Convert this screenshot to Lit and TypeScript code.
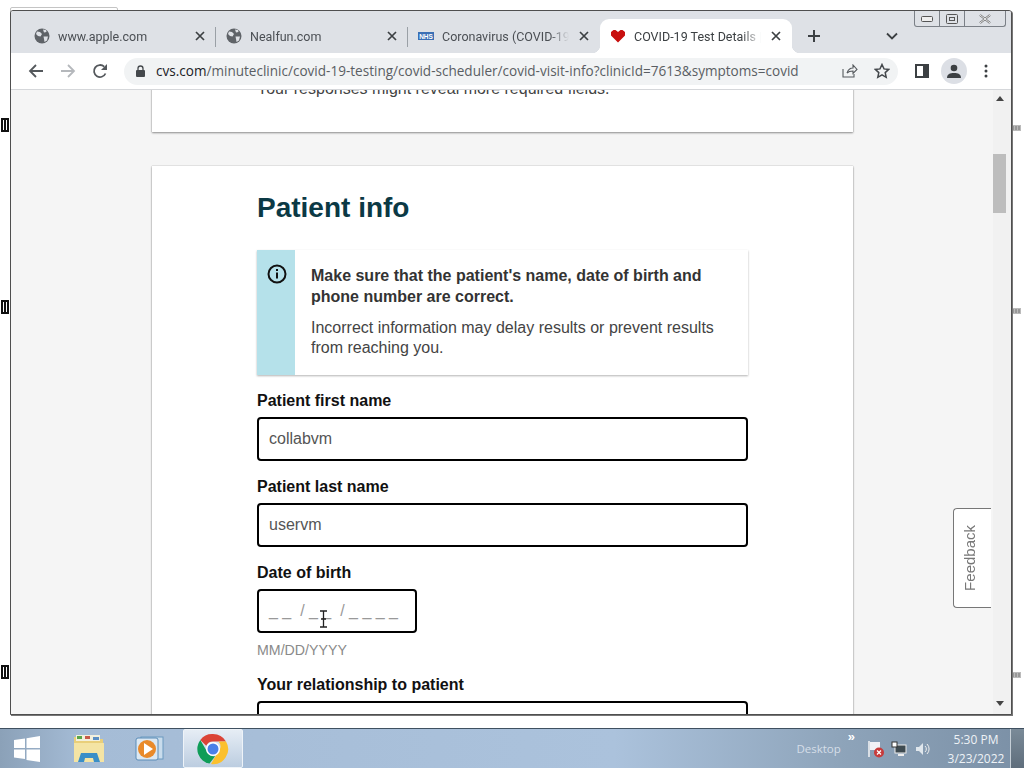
import { LitElement, html, css } from "lit";
import { customElement } from "lit/decorators.js";

const globe = html`<svg class="fav" viewBox="0 0 16 16"><circle cx="8" cy="8" r="7.5" fill="#5f6368"/><path d="M3 3.500l3 .5 2 2-1.500 2.500-2.500-.5L2 6zM9 1.500l3 .5.500 2-2.500.5zM9.500 8.500l4.500 0-1 4-2.500 1.500-.5-3z" fill="#dee1e6"/></svg>`;
const close = html`<svg class="x" viewBox="0 0 10 10"><path d="M1 1l8 8M9 1l-8 8" stroke="#3c4043" stroke-width="1.700" fill="none"/></svg>`;

@customElement("app-root")
export class AppRoot extends LitElement {
  static styles = css`
    :host { display: flex; flex-direction: column; width: 1024px; height: 768px; position: relative; overflow: hidden; background: #fff; font-family: "Liberation Sans", Arial, sans-serif; }
    .desktop { flex: 1; position: relative; }
    .backwin { position: absolute; left: 10px; top: 7px; width: 106px; height: 8px; border: 1px solid #c4c4c4; border-radius: 2px 2px 0 0; }
    .mark { position: absolute; }
    .window { position: absolute; left: 10px; top: 10px; width: 1000px; height: 703px; border: 1px solid #4f4f4f; border-radius: 3px 3px 0 0; box-shadow: 1px 1px 0 #777; display: flex; flex-direction: column; overflow: hidden; background: #f5f5f5; }
    .tabstrip { height: 42px; background: #dee1e6; display: flex; align-items: flex-end; padding-left: 13px; flex: none; position: relative; }
    .tab { width: 192px; height: 34px; display: flex; align-items: center; position: relative; box-sizing: border-box; padding-left: 10px; font: 12.500px Roboto, sans-serif; color: #4b4f54; }
    .tab.sep::after { content: ""; position: absolute; right: 0; top: 8px; height: 20px; width: 1px; background: #9aa0a6; }
    .tab.active { background: #fff; border-radius: 9px 9px 0 0; color: #3c4043; }
    .tab.active::before, .tab.active::after { content: ""; position: absolute; bottom: 0; width: 8px; height: 8px; }
    .tab.active::before { left: -8px; background: radial-gradient(circle at 0 0, transparent 8px, #fff 8.500px); }
    .tab.active::after { right: -8px; background: radial-gradient(circle at 100% 0, transparent 8px, #fff 8.500px); }
    .fav { width: 16px; height: 16px; flex: none; margin-right: 8px; }
    .title { flex: 1; white-space: nowrap; overflow: hidden; min-width: 0; -webkit-mask-image: linear-gradient(90deg, #000 85%, transparent 100%); mask-image: linear-gradient(90deg, #000 85%, transparent 100%); }
    .x { width: 10px; height: 10px; flex: none; margin: 0 11px 0 10px; }
    .plus { width: 14px; height: 14px; margin: 0 0 10px 15px; flex: none; }
    .chev { width: 12px; height: 8px; margin: 0 0 13px 65px; flex: none; }
    .controls { position: absolute; right: 5px; top: 0; width: 92px; height: 16px; box-sizing: border-box; border: 1px solid #7b8087; border-top: 0; border-radius: 0 0 3px 3px; display: grid; grid-template-columns: 25px 25px 1fr; }
    .controls > div { display: flex; align-items: center; justify-content: center; border-right: 1px solid #7b8087; }
    .controls > div:last-child { border-right: 0; }
    .toolbar { height: 36px; flex: none; background: #fff; border-bottom: 1px solid #d5d7da; display: flex; align-items: center; box-sizing: content-box; }
    .tb { flex: none; display: flex; align-items: center; justify-content: center; width: 32px; height: 32px; }
    .tb.first { margin-left: 8px; }
    .tbs { display: flex; padding-left: 9px; }
    .omni { margin-left: 8px; width: 774px; height: 27px; border-radius: 14px; background: #f1f3f4; display: flex; align-items: center; padding-left: 12px; box-sizing: border-box; font: 13.550px "Open Sans", sans-serif; color: #5a5e63; flex: none; }
    .omni .url { flex: none; width: 678px; margin-left: 11px; white-space: nowrap; }
    .omni .url b { font-weight: 400; color: #202124; }
    .omni svg { flex: none; }
    .omni .act { width: 32px; flex: none; display: flex; justify-content: center; }
    .avatar { width: 26px; height: 26px; border-radius: 50%; background: #dcdfe5; display: flex; align-items: center; justify-content: center; }
    .view { flex: 1; min-height: 0; display: flex; overflow: hidden; position: relative; }
    .page { width: 982px; overflow: hidden; flex: none; background: #f5f5f5; }
    .bar { flex: 1; background: #f1f1f1; display: flex; flex-direction: column; position: relative; }
    .thumb { position: absolute; left: 0; top: 64px; width: 13px; height: 59px; background: #bdbdbd; }
    .arr { position: absolute; left: 3px; width: 0; height: 0; border-left: 4px solid transparent; border-right: 4px solid transparent; }
    .arr.up { top: 6px; border-bottom: 5px solid #444; }
    .arr.dn { bottom: 8px; border-top: 5px solid #444; }
    .card { margin-left: 141px; width: 701px; box-sizing: border-box; background: #fff; box-shadow: 0 1px 2px rgba(0,0,0,.4), 0 0 1px rgba(0,0,0,.3); padding-left: 105px; }
    .card.top { margin-top: -10px; height: 52px; margin-bottom: 34px; font-size: 16px; color: #444; line-height: 18px; }
    .inner { width: 491px; }
    h1 { margin: 0; padding-top: 24px; font-size: 28px; line-height: 36px; font-weight: 700; color: #0b3945; }
    .note { margin-top: 24px; height: 125px; display: flex; background: #fff; box-shadow: 0 1px 2px rgba(0,0,0,.3); }
    .strip { width: 38px; flex: none; background: #b5e1ea; display: flex; justify-content: center; padding: 14px 0 0 1px; box-sizing: border-box; }
    .msg { padding: 15px 24px 0 16px; font-size: 16px; color: #444; }
    .msg p { margin: 0; line-height: 20px; }
    .msg p.b { font-weight: 700; line-height: 21px; margin-bottom: 11px; color: #333; }
    label { display: block; font-size: 16px; font-weight: 700; color: #111; line-height: 18px; }
    .lbl1 { margin-top: 17px; }
    .field { margin-top: 7px; height: 44px; box-sizing: border-box; border: 2px solid #000; border-radius: 4px; display: flex; align-items: center; padding-left: 10px; font-size: 16px; color: #555; background: #fff; }
    .gap { margin-top: 17px; }
    .field.dob { width: 160px; color: #999; white-space: pre; }
    .hint { margin-top: 9px; font-size: 14.200px; line-height: 16px; color: #8a8a8a; }
    .gap2 { margin-top: 18px; }
    .feedback { position: absolute; right: 20px; top: 418px; width: 38px; height: 100px; box-sizing: border-box; background: #fff; border: 1px solid #777; border-right: 0; border-radius: 4px 0 0 4px; display: flex; align-items: center; justify-content: center; padding-right: 6px; }
    .feedback span { writing-mode: vertical-rl; transform: rotate(180deg); font-size: 15px; color: #777; }
    .cursor { position: absolute; left: 308px; top: 520px; }
    .taskbar { height: 40px; flex: none; position: relative; display: flex; align-items: center; border-top: 1px solid #3f5060; box-sizing: border-box; background: linear-gradient(90deg, #8ba1b8 0, #a5bcd6 8%, #abc2dc 60%, #8ea4ba 82%, #7b90a6 100%); }
    .start { width: 59px; display: flex; justify-content: center; flex: none; padding-right: 5px; box-sizing: border-box; }
    .tk { width: 60px; height: 39px; display: flex; align-items: center; justify-content: center; flex: none; box-sizing: border-box; }
    .tk.on { margin-left: 4px; background: linear-gradient(#e6edf5, #bccde0); border: 1px solid #eef3f8; border-radius: 2px; }
    .tray { margin-left: auto; display: flex; align-items: center; color: #d8e2ec; }
    .desk { font: 11.500px "Open Sans", sans-serif; color: #d5dee8; margin-right: 7px; }
    .more { font: 700 13px "Liberation Sans", sans-serif; color: #fff; align-self: flex-start; margin-right: 12px; }
    .tray svg { flex: none; }
    .s1 { margin-right: 6px; }
    .s2 { margin-right: 8px; }
    .s3 { margin-right: 10px; }
    .clock { font: 12px/19px "Open Sans", sans-serif; text-align: center; color: #eef2f6; width: 68px; margin-left: 1px; }
    .show { width: 14px; height: 39px; background: linear-gradient(#7a8a98, #5f6e7c); border-left: 1px solid #c5ced6; flex: none; box-sizing: border-box; }
  `;

  render() {
    return html`
      <div class="desktop">
        <div class="backwin"></div>
        ${[117, 299, 664].map((t) => html`<svg class="mark" width="10" height="16" viewBox="0 0 10 16" style="left:0px;top:${t}px"><rect x="1" y="1" width="8" height="14" fill="#111"/><path d="M3.500 3v10M6.500 3v10" stroke="#fff" stroke-width="1"/></svg>`)}
        ${[125, 308, 672].map((t) => html`<svg class="mark" width="9" height="6" viewBox="0 0 9 6" style="left:1012px;top:${t}px"><rect width="9" height="6" fill="#bbb"/><path d="M1 1v4M4 1v4M7 1v4" stroke="#777"/></svg>`)}
        <div class="window">
          <div class="tabstrip">
            <div class="tab sep">${globe}<span class="title">www.apple.com</span>${close}</div>
            <div class="tab sep">${globe}<span class="title">Nealfun.com</span>${close}</div>
            <div class="tab">
              <svg class="fav" viewBox="0 0 16 16"><rect y="4" width="16" height="8" fill="#3a6fb5"/><text x="8" y="10.500" font-size="6.500" font-weight="700" font-family="Liberation Sans" fill="#fff" text-anchor="middle">NHS</text></svg>
              <span class="title">Coronavirus (COVID-19)</span>${close}
            </div>
            <div class="tab active">
              <svg class="fav" viewBox="0 0 16 16"><path d="M8 14.500L1 7.500V4l2.500-2h2L8 4l2.500-2h2L15 4v3.500z" fill="#c8100f"/></svg>
              <span class="title">COVID-19 Test Details |</span>${close}
            </div>
            <svg class="plus" viewBox="0 0 14 14"><path d="M7 1v12M1 7h12" stroke="#3c4043" stroke-width="2" fill="none"/></svg>
            <svg class="chev" viewBox="0 0 12 8"><path d="M1 1.500l5 5 5-5" stroke="#3c4043" stroke-width="1.800" fill="none"/></svg>
            <div class="controls">
              <div><svg width="12" height="6" viewBox="0 0 12 6"><rect x=".5" y=".5" width="11" height="5" rx="1" fill="#eee" stroke="#555"/></svg></div>
              <div><svg width="12" height="10" viewBox="0 0 12 10"><rect x=".5" y=".5" width="11" height="9" rx="1" fill="none" stroke="#555"/><rect x="3.500" y="3.500" width="5" height="3" fill="none" stroke="#555"/></svg></div>
              <div><svg width="12" height="10" viewBox="0 0 12 10"><path d="M1 1l10 8M11 1L1 9" stroke="#666" stroke-width="2.200" fill="none"/><path d="M1 1l10 8M11 1L1 9" stroke="#eee" stroke-width="1" fill="none"/></svg></div>
            </div>
          </div>
          <div class="toolbar">
            <div class="tbs">
              <div class="tb"><svg width="16" height="16" viewBox="0 0 16 16"><path d="M15 8H2M8 2L2 8l6 6" stroke="#54585c" stroke-width="1.800" fill="none"/></svg></div>
              <div class="tb"><svg width="16" height="16" viewBox="0 0 16 16"><path d="M1 8h13M8 2l6 6-6 6" stroke="#b5b8bc" stroke-width="1.800" fill="none"/></svg></div>
              <div class="tb"><svg width="16" height="16" viewBox="0 0 16 16"><path d="M13.500 10.500A6 6 0 1 1 12.200 3.700" stroke="#54585c" stroke-width="1.800" fill="none"/><path d="M15 1v6H9z" fill="#54585c"/></svg></div>
            </div>
            <div class="omni">
              <svg width="9" height="12" viewBox="0 0 9 12"><path d="M2 5V3.500a2.500 2.500 0 0 1 5 0V5" stroke="#44484c" stroke-width="1.300" fill="none"/><rect y="5" width="9" height="7" rx="1" fill="#44484c"/></svg>
              <span class="url"><b>cvs.com</b>/minuteclinic/covid-19-testing/covid-scheduler/covid-visit-info?clinicId=7613&symptoms=covid</span>
              <span class="act"><svg width="16" height="14" viewBox="0 0 16 14"><path d="M1 5v8h11v-3M5 9c1-3 3-5 6-5V1l4 4.500-4 4V7C8 7 6 8 5 9z" stroke="#55595d" stroke-width="1.100" fill="none"/></svg></span>
              <span class="act"><svg width="16" height="16" viewBox="0 0 16 16"><path d="M8 1.500l2 4.400 4.700.5-3.500 3.200 1 4.700L8 11.900l-4.200 2.400 1-4.700L1.300 6.400 6 5.900z" stroke="#44484c" stroke-width="1.500" fill="none"/></svg></span>
            </div>
            <div class="tb first"><svg width="14" height="14" viewBox="0 0 14 14"><rect x="1" y="1" width="12" height="12" fill="none" stroke="#3c4043" stroke-width="2"/><rect x="8" y="1" width="5" height="12" fill="#3c4043"/></svg></div>
            <div class="tb"><div class="avatar"><svg width="14" height="14" viewBox="0 0 14 14"><circle cx="7" cy="4" r="3.300" fill="#3c4043"/><path d="M0 14c0-4 3-5 7-5s7 1 7 5z" fill="#3c4043"/></svg></div></div>
            <div class="tb"><svg width="4" height="14" viewBox="0 0 4 14"><circle cx="2" cy="2" r="1.500" fill="#3c4043"/><circle cx="2" cy="7" r="1.500" fill="#3c4043"/><circle cx="2" cy="12" r="1.500" fill="#3c4043"/></svg></div>
          </div>
          <div class="view">
            <div class="page">
              <div class="card top">Your responses might reveal more required fields.</div>
              <div class="card">
                <div class="inner">
                  <h1>Patient info</h1>
                  <div class="note">
                    <div class="strip"><svg width="20" height="20" viewBox="0 0 20 20"><circle cx="10" cy="10" r="8.500" fill="none" stroke="#111" stroke-width="2"/><rect x="9" y="8.500" width="2" height="6" fill="#111"/><rect x="9" y="5" width="2" height="2" fill="#111"/></svg></div>
                    <div class="msg">
                      <p class="b">Make sure that the patient's name, date of birth and phone number are correct.</p>
                      <p>Incorrect information may delay results or prevent results from reaching you.</p>
                    </div>
                  </div>
                  <label class="lbl1">Patient first name</label>
                  <div class="field">collabvm</div>
                  <label class="gap">Patient last name</label>
                  <div class="field">uservm</div>
                  <label class="gap">Date of birth</label>
                  <div class="field dob">_ _  / _ _  / _ _ _ _</div>
                  <div class="hint">MM/DD/YYYY</div>
                  <label class="gap2">Your relationship to patient</label>
                  <div class="field"></div>
                </div>
              </div>
            </div>
            <div class="bar"><div class="arr up"></div><div class="thumb"></div><div class="arr dn"></div></div>
            <div class="feedback"><span>Feedback</span></div>
            <svg class="cursor" width="9" height="18" viewBox="0 0 9 18"><path d="M1 1h7M1 17h7M4.500 1v16M2 9h5" stroke="#222" stroke-width="1.300" fill="none"/></svg>
          </div>
        </div>
      </div>
      <div class="taskbar">
        <div class="start"><svg width="28" height="26" viewBox="0 0 28 26"><path d="M1 4l11-1.500V12H1zM13.500 2.300L27 0v12H13.500zM1 13.500h11V23L1 21.500zM13.500 13.500H27V26l-13.500-2z" fill="#fff"/></svg></div>
        <div class="tk"><svg width="32" height="30" viewBox="0 0 32 30"><path d="M1 3h10l2 2h17v23H1z" fill="#e9cf7a"/><rect x="3" y="1" width="24" height="6" fill="#f3f0dd"/><rect x="4" y="2" width="5" height="3" fill="#5aa64a"/><rect x="12" y="2" width="5" height="3" fill="#c85a4a"/><rect x="20" y="3" width="6" height="3" fill="#5b8fc4"/><rect x="1" y="9" width="30" height="19" fill="#f4e4a4"/><path d="M5 28l3-9h16l3 9h-6l-1-4h-8l-1 4z" fill="#3a8fc8"/></svg></div>
        <div class="tk"><svg width="32" height="28" viewBox="0 0 32 28"><rect x="8" y="2" width="22" height="22" fill="#c9dcec" stroke="#6b9ac0"/><rect x="3" y="3" width="22" height="22" rx="2" fill="#dce8f2" stroke="#5a8cb8"/><circle cx="14" cy="14" r="9" fill="#e98a2a"/><path d="M11 8l9 6-9 6z" fill="#fff"/></svg></div>
        <div class="tk on"><svg width="32" height="32" viewBox="0 0 32 32"><path d="M16 1a15 15 0 0 1 13 7.500H16a7.500 7.500 0 0 0-6.800 4.300L3.300 6.900A15 15 0 0 1 16 1z" fill="#db4437"/><path d="M3.300 6.900l6.400 11A7.500 7.500 0 0 0 18.200 23.200L12.500 30.600A15 15 0 0 1 3.300 6.900z" fill="#0f9d58"/><path d="M29 8.500A15 15 0 0 1 14 31l6.500-11.300A7.500 7.500 0 0 0 21.500 8.500z" fill="#fbc02d"/><circle cx="16" cy="16" r="7" fill="#fff"/><circle cx="16" cy="16" r="5.500" fill="#4a80e8"/></svg></div>
        <div class="tray">
          <span class="desk">Desktop</span>
          <span class="more">&raquo;</span>
          <svg class="s1" width="18" height="18" viewBox="0 0 18 18"><path d="M2 1v16" stroke="#f4f4f4" stroke-width="1.500"/><path d="M3 2h10v8H3z" fill="#f2f2f6"/><circle cx="12" cy="12.500" r="5" fill="#c73b3b"/><path d="M10 10.500l4 4M14 10.500l-4 4" stroke="#fff" stroke-width="1.200"/></svg>
          <svg class="s2" width="16" height="16" viewBox="0 0 16 16"><rect x="4" y="4" width="11" height="8" fill="#3e4a50" stroke="#eee"/><rect x="1" y="1" width="5" height="5" fill="#fff" stroke="#333"/><path d="M7 14h6" stroke="#eee" stroke-width="2"/></svg>
          <svg class="s3" width="16" height="16" viewBox="0 0 16 16"><path d="M1 6h3l4-4v12l-4-4H1z" fill="#dfe6ec"/><path d="M10 5a4 4 0 0 1 0 6M12 3a7 7 0 0 1 0 10" stroke="#eee" fill="none"/></svg>
          <div class="clock">5:30 PM<br>3/23/2022</div>
          <div class="show"></div>
        </div>
      </div>
    `;
  }
}
